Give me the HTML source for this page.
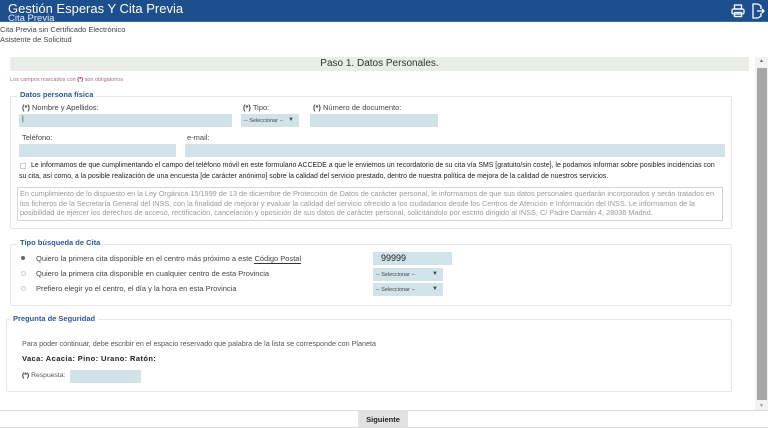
<!DOCTYPE html>
<html><head><meta charset="utf-8"><style>
*{margin:0;padding:0;box-sizing:border-box}
body{width:768px;height:428px;overflow:hidden;background:#fff;font-family:"Liberation Sans",sans-serif;position:relative;color:#333}
.a{position:absolute;white-space:nowrap}
.inp{position:absolute;background:#cfe3e8;height:13px}
.sel{position:absolute;background:#cfe3e8;height:13px;font-size:5.5px;color:#444;padding:4px 0 0 3px}
.sel b{position:absolute;right:5px;top:3px;font-size:6px}
.fs{position:absolute;border:1px solid #e6e6e6;border-radius:2px}
.lg{position:absolute;background:#fff;padding:0 3px;color:#2b5a91;font-weight:bold;font-size:7.5px}
.lb{font-size:7.5px;color:#444}
</style></head><body>
<div class="a" style="left:0;top:0;width:768px;height:22px;background:#1d4f8f;border-bottom:1px solid #3a6aa8"></div>
<div class="a" style="left:8px;top:1px;color:#fff;font-size:13px">Gestión Esperas Y Cita Previa</div>
<div class="a" style="left:8px;top:13px;color:#e8eef6;font-size:9.5px">Cita Previa</div>
<svg class="a" style="left:731px;top:4px" width="14" height="14" viewBox="0 0 14 14" fill="none" stroke="#fff" stroke-width="1.3"><rect x="3.5" y="1" width="7" height="4"/><rect x="1" y="5" width="12" height="5" rx="1.5"/><rect x="3.5" y="8.5" width="7" height="4"/></svg>
<svg class="a" style="left:751px;top:3px" width="14" height="16" viewBox="0 0 14 16" fill="none" stroke="#fff" stroke-width="1.3"><path d="M7 1H2v14h5M7 1l3 2v3M10 10v3l-3 2"/><path d="M6 8h7M11 6l2 2-2 2"/></svg>
<div class="a lb" style="left:0;top:25px;font-size:7.5px">Cita Previa sin Certificado Electrónico</div>
<div class="a lb" style="left:0;top:35px;font-size:7.5px">Asistente de Solicitud</div>
<div class="a" style="left:10px;top:57px;width:739px;height:14px;background:#e8ede8"></div>
<div class="a" style="left:0;width:759px;top:58px;text-align:center;font-size:10px;color:#333">Paso 1. Datos Personales.</div>
<div class="a" style="left:755px;top:57px;width:13px;height:353px;background:#f2f2f2"></div>
<div class="a" style="left:757px;top:68px;width:10px;height:332px;background:#a6a6a6"></div>
<div class="a" style="left:759px;top:58px;font-size:5px;color:#666">▲</div>
<div class="a" style="left:759px;top:403px;font-size:5px;color:#999">▼</div>
<div class="a" style="left:10px;top:77px;font-size:5.5px;color:#a07080">Los campos marcados con <b style="color:#a02040">(*)</b> son obligatorios</div>

<div class="fs" style="left:10px;top:96px;width:722px;height:133px"></div>
<div class="lg" style="left:17px;top:90px">Datos persona física</div>
<div class="a lb" style="left:22px;top:103px"><b>(*)</b> Nombre y Apellidos:</div>
<div class="a lb" style="left:243px;top:103px"><b>(*)</b> Tipo:</div>
<div class="a lb" style="left:313px;top:103px"><b>(*)</b> Número de documento:</div>
<div class="inp" style="left:19px;top:114px;width:213px"><span style="position:absolute;left:3px;top:2px;font-size:7px">|</span></div>
<div class="sel" style="left:241px;top:114px;width:58px">-- Seleccionar --<b>▼</b></div>
<div class="inp" style="left:310px;top:114px;width:128px"></div>
<div class="a lb" style="left:22px;top:133px">Teléfono:</div>
<div class="a lb" style="left:187px;top:133px">e-mail:</div>
<div class="inp" style="left:19px;top:144px;width:157px"></div>
<div class="inp" style="left:185px;top:144px;width:540px"></div>
<div class="a" style="left:20px;top:163px;width:6px;height:6px;border:1px solid #ccc"></div>
<div class="a" style="left:31px;top:162px;font-size:6.95px;color:#222">Le informamos de que cumplimentando el campo del teléfono móvil en este formulario ACCEDE a que le enviemos un recordatorio de su cita vía SMS [gratuito/sin coste], le podamos informar sobre posibles incidencias con</div>
<div class="a" style="left:19px;top:173px;font-size:6.95px;color:#222">su cita, así como, a la posible realización de una encuesta [de carácter anónimo] sobre la calidad del servicio prestado, dentro de nuestra política de mejora de la calidad de nuestros servicios.</div>
<div class="a" style="left:17px;top:187px;width:706px;height:34px;border:1px solid #d4d4d4"></div>
<div class="a" style="left:20px;top:189px;font-size:7.3px;color:#999;line-height:9.6px;white-space:normal;width:702px">En cumplimiento de lo dispuesto en la Ley Orgánica 15/1999 de 13 de diciembre de Protección de Datos de carácter personal, le informamos de que sus datos personales quedarán incorporados y serán tratados en los ficheros de la Secretaría General del INSS, con la finalidad de mejorar y evaluar la calidad del servicio ofrecido a los ciudadanos desde los Centros de Atención e Información del INSS. Le informamos de la posibilidad de ejercer los derechos de acceso, rectificación, cancelación y oposición de sus datos de carácter personal, solicitándolo por escrito dirigido al INSS, C/ Padre Damián 4, 28036 Madrid.</div>

<div class="fs" style="left:10px;top:244px;width:722px;height:62px"></div>
<div class="lg" style="left:17px;top:238px">Tipo búsqueda de Cita</div>
<div class="a" style="left:21px;top:256px;width:4px;height:4px;border-radius:50%;background:#666"></div>
<div class="a" style="left:21px;top:271px;width:5px;height:5px;border-radius:50%;border:1px solid #ccc"></div>
<div class="a" style="left:21px;top:286px;width:5px;height:5px;border-radius:50%;border:1px solid #ccc"></div>
<div class="a lb" style="left:36px;top:254px">Quiero la primera cita disponible en el centro más próximo a este <span style="border-bottom:1px solid #333">Código Postal</span></div>
<div class="a lb" style="left:36px;top:269px">Quiero la primera cita disponible en cualquier centro de esta Provincia</div>
<div class="a lb" style="left:36px;top:284px">Prefiero elegir yo el centro, el día y la hora en esta Provincia</div>
<div class="inp" style="left:373px;top:252px;width:79px;font-size:9px;color:#222;padding:1px 0 0 8px">99999</div>
<div class="sel" style="left:373px;top:268px;width:70px">-- Seleccionar --<b>▼</b></div>
<div class="sel" style="left:373px;top:283px;width:70px">-- Seleccionar --<b>▼</b></div>

<div class="fs" style="left:6px;top:319px;width:726px;height:73px"></div>
<div class="lg" style="left:10px;top:314px">Pregunta de Seguridad</div>
<div class="a" style="left:22px;top:339px;font-size:7.2px;color:#555">Para poder continuar, debe escribir en el espacio reservado que palabra de la lista se corresponde con Planeta</div>
<div class="a" style="left:22px;top:354px;font-size:7.5px;color:#222;font-weight:bold;letter-spacing:0.4px">Vaca: Acacia: Pino: Urano: Ratón:</div>
<div class="a" style="left:22px;top:372px;font-size:6.8px;color:#555"><b style="color:#222">(*)</b> Respuesta:</div>
<div class="inp" style="left:70px;top:370px;width:71px"></div>

<div class="a" style="left:0;top:410px;width:768px;height:18px;border-top:1px solid #ddd;border-bottom:1px solid #ddd"></div>
<div class="a" style="left:358px;top:411px;width:50px;height:16px;background:#e2e2e2;font-size:7.5px;font-weight:bold;color:#222;text-align:center;padding-top:4px">Siguiente</div>
</body></html>
